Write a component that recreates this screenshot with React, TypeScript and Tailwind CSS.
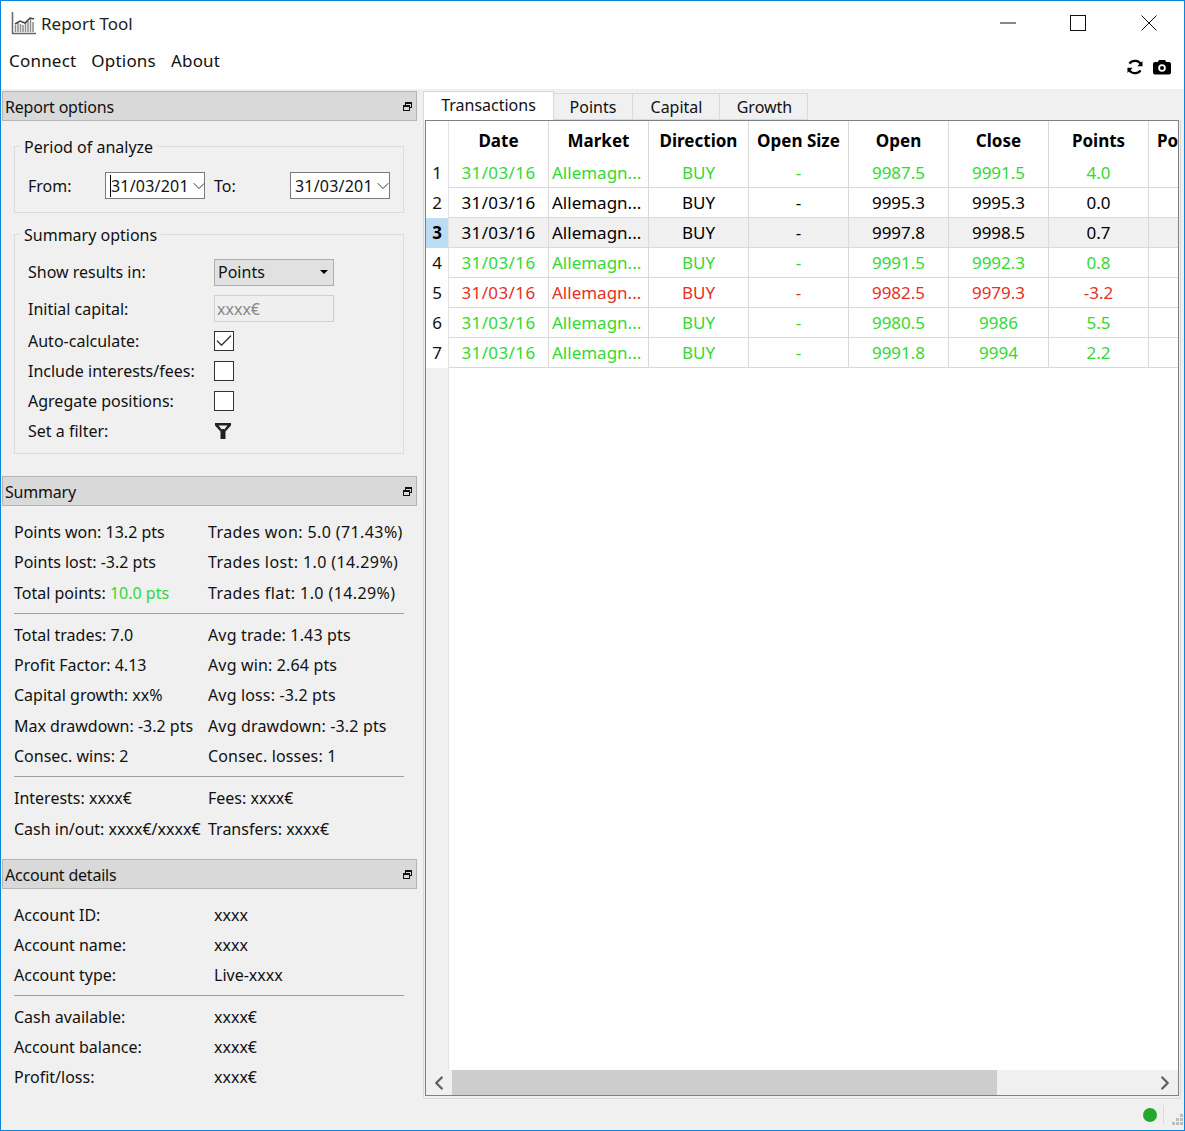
import { ChevronDown, ChevronLeft, ChevronRight, Check } from "lucide-react"

const green = "text-[#33d933]"
const red = "text-[#e6301f]"

const rows = [
  { open: "9987.5", close: "9991.5", points: "4.0", color: green },
  { open: "9995.3", close: "9995.3", points: "0.0", color: "text-black" },
  { open: "9997.8", close: "9998.5", points: "0.7", color: "text-black" },
  { open: "9991.5", close: "9992.3", points: "0.8", color: green },
  { open: "9982.5", close: "9979.3", points: "-3.2", color: red },
  { open: "9980.5", close: "9986", points: "5.5", color: green },
  { open: "9991.8", close: "9994", points: "2.2", color: green },
]

const headers = ["Date", "Market", "Direction", "Open Size", "Open", "Close", "Points"]

function DockHeader({ title }: { title: string }) {
  return (
    <div className="flex h-[30px] items-center justify-between border border-[#b4b4b4] bg-[#d9d9d9] pl-[2px] pr-[4px]">
      <span className="pt-[1px] tracking-[-0.2px]">{title}</span>
      <svg width="9" height="9" viewBox="0 0 9 9" fill="none" stroke="#111" strokeWidth="1">
        <rect x="2.5" y="0.5" width="6" height="5" />
        <rect x="0.5" y="3.5" width="6" height="5" fill="#d9d9d9" />
        <path d="M3 1.5h5M1 4.5h5" />
      </svg>
    </div>
  )
}

function StatRow({ left, right, accent, h = "h-[30px]", col = "w-[194px]", tr = "" }: { left: string; right: string; accent?: string; h?: string; col?: string; tr?: string }) {
  return (
    <div className={`flex ${h} items-center whitespace-nowrap`}>
      <div className={col}>
        {left}
        {accent && <span className={green}> {accent}</span>}
      </div>
      <div className={tr}>{right}</div>
    </div>
  )
}

function Rule() {
  return <div className="mb-[6px] mt-[5px] h-px bg-[#a0a0a0]" />
}

function DateField({ caret }: { caret?: boolean }) {
  return (
    <div className="flex h-[27px] w-[100px] items-center overflow-hidden border border-[#7a7a7a] bg-white pl-[4px]">
      <span className={`tracking-[0.2px] ${caret ? "border-l border-black" : ""}`}>31/03/201</span>
      <ChevronDown size={20} strokeWidth={1.2} className="ml-auto mr-[-1px] shrink-0 text-[#333]" />
    </div>
  )
}

function OptionRow({ label, children }: { label: string; children: React.ReactNode }) {
  return (
    <div className="flex h-[30px] items-center">
      <div className="w-[186px] shrink-0">{label}</div>
      {children}
    </div>
  )
}

function CheckBox({ checked }: { checked?: boolean }) {
  return (
    <div className="flex h-[20px] w-[20px] items-center justify-center border border-[#333] bg-white">
      {checked && <Check size={20} strokeWidth={1.6} className="shrink-0 text-[#333]" />}
    </div>
  )
}

export default function App() {
  return (
    <div className="flex h-[1131px] w-[1185px] flex-col overflow-hidden border border-[#0a84dc] bg-[#f0f0f0] font-['Noto_Sans','Open_Sans',sans-serif] text-[16px] leading-[22px] text-[#111]">
      {/* Title bar */}
      <div className="bg-white">
        <div className="flex h-[41px] items-center pl-[10px] pt-[2px]">
          <svg width="26" height="24" viewBox="0 0 26 24" className="shrink-0">
            <path d="M1.500 1v21.500H25" fill="none" stroke="#666" strokeWidth="1.500" />
            <path d="M4.500 21V14M7 21V12M9.500 21V13M12 21V14M14.500 21V11M17 21V10M19.500 21V8M22 21V11" stroke="#8c8c8c" strokeWidth="1.500" />
            <path d="M4 13l5-3 5 2 5-5 4 1" fill="none" stroke="#444" strokeWidth="1.500" />
          </svg>
          <span className="ml-[4px] pt-[2px] text-[17px] text-[#222]">Report Tool</span>
          <div className="ml-auto flex items-center">
            <svg width="16" height="2" className="mr-[54px]"><path d="M0 1h16" stroke="#111" /></svg>
            <svg width="16" height="16" className="mr-[55px]"><rect x="0.5" y="0.5" width="15" height="15" fill="none" stroke="#111" /></svg>
            <svg width="16" height="16" className="mr-[27px]"><path d="M0.5 0.5l15 15M15.5 0.5l-15 15" stroke="#111" /></svg>
          </div>
        </div>
        <div className="flex h-[47px] pl-[8px] pr-[13px]">
          <div className="flex gap-[15px] pt-[8px] text-[17px] tracking-[0.2px]">
            <span>Connect</span>
            <span>Options</span>
            <span>About</span>
          </div>
          <div className="ml-auto flex items-center gap-[9px] pt-[3px]">
            <svg width="18" height="18" viewBox="0 0 24 24" fill="none" stroke="#000" strokeWidth="3">
              <path d="M20.500 10A9 9 0 0 0 4.600 7.500M3.500 14a9 9 0 0 0 15.900 2.500" />
              <path d="M22 4v7h-7zM2 20v-7h7z" fill="#000" strokeWidth="0" />
            </svg>
            <svg width="18" height="16" viewBox="0 0 18 16">
              <path fillRule="evenodd" d="M6 1h6l1.200 2H16a2 2 0 0 1 2 2v8.500a2 2 0 0 1-2 2H2a2 2 0 0 1-2-2V5a2 2 0 0 1 2-2h2.800zM9 5.200a3.800 3.800 0 1 0 0 7.600 3.800 3.800 0 0 0 0-7.600zM9 7a2 2 0 1 1 0 4 2 2 0 0 1 0-4z" fill="#000" />
            </svg>
          </div>
        </div>
      </div>

      {/* Body */}
      <div className="flex min-h-0 flex-1 pl-[1px] pr-[4px] pt-[2px]">
        {/* Left column */}
        <div className="w-[415px] shrink-0">
          <DockHeader title="Report options" />

          <fieldset className="ml-[12px] mr-[13px] mt-[14px] h-[78px] border border-[#dcdcdc] pl-[13px]">
            <legend className="ml-[-8px] translate-y-px px-[4px] leading-[22px]">Period of analyze</legend>
            <div className="mt-[15px] flex items-center">
              <div className="w-[77px]">From:</div>
              <DateField caret />
              <div className="ml-[9px] w-[76px]">To:</div>
              <DateField />
            </div>
          </fieldset>

          <fieldset className="ml-[12px] mr-[13px] mt-[10px] h-[231px] border border-[#dcdcdc] pl-[13px]">
            <legend className="ml-[-8px] translate-y-px px-[4px] leading-[22px]">Summary options</legend>
            <div className="mt-[10px] flex h-[34px] items-center">
              <div className="w-[186px] shrink-0">Show results in:</div>
              <div className="flex h-[27px] w-[120px] items-center justify-between border border-[#adadad] bg-[#e1e1e1] pl-[3px] pr-[5px]">
                Points
                <span className="h-0 w-0 border-x-[4px] border-t-[4px] border-x-transparent border-t-black" />
              </div>
            </div>
            <div className="mb-[3px] mt-[5px] flex h-[29px] items-center">
              <div className="w-[186px] shrink-0">Initial capital:</div>
              <div className="flex h-[27px] w-[120px] items-center border border-[#d0d0d0] bg-[#efefef] pl-[2px] text-[#888]">xxxx€</div>
            </div>
            <OptionRow label="Auto-calculate:"><CheckBox checked /></OptionRow>
            <OptionRow label="Include interests/fees:"><CheckBox /></OptionRow>
            <OptionRow label="Agregate positions:"><CheckBox /></OptionRow>
            <OptionRow label="Set a filter:">
              <svg width="16" height="16" viewBox="0 0 16 16" className="ml-[1px]">
                <path fillRule="evenodd" d="M0 0h16v2.500L10.500 8.500V16h-5V8.500L0 2.500zM3.500 2.500L7 6.800v-.8h2v.8l3.500-4.300z" fill="#222" />
              </svg>
            </OptionRow>
          </fieldset>

          <div className="mt-[22px]">
            <DockHeader title="Summary" />
          </div>
          <div className="pl-[12px] pr-[13px] pt-[11px]">
            <StatRow left="Points won: 13.2 pts" right="Trades won: 5.0 (71.43%)" tr="tracking-[0.4px]" />
            <StatRow left="Points lost: -3.2 pts" right="Trades lost: 1.0 (14.29%)" tr="tracking-[0.4px]" />
            <StatRow left="Total points:" accent="10.0 pts" right="Trades flat: 1.0 (14.29%)" tr="tracking-[0.4px]" h="h-[31px]" />
            <Rule />
            <StatRow left="Total trades: 7.0" right="Avg trade: 1.43 pts" tr="tracking-[0.15px]" />
            <StatRow left="Profit Factor: 4.13" right="Avg win: 2.64 pts" tr="tracking-[0.15px]" />
            <StatRow left="Capital growth: xx%" right="Avg loss: -3.2 pts" tr="tracking-[0.15px]" />
            <StatRow left="Max drawdown: -3.2 pts" right="Avg drawdown: -3.2 pts" tr="tracking-[0.15px]" h="h-[31px]" />
            <StatRow left="Consec. wins: 2" right="Consec. losses: 1" tr="tracking-[0.15px]" />
            <Rule />
            <StatRow left="Interests: xxxx€" right="Fees: xxxx€" />
            <StatRow left="Cash in/out: xxxx€/xxxx€" right="Transfers: xxxx€" h="h-[31px]" />
          </div>

          <div className="mt-[15px]">
            <DockHeader title="Account details" />
          </div>
          <div className="pl-[12px] pr-[13px] pt-[11px]">
            <StatRow left="Account ID:" right="xxxx" col="w-[200px]" />
            <StatRow left="Account name:" right="xxxx" col="w-[200px]" />
            <StatRow left="Account type:" right="Live-xxxx" col="w-[200px]" />
            <Rule />
            <StatRow left="Cash available:" right="xxxx€" col="w-[200px]" />
            <StatRow left="Account balance:" right="xxxx€" col="w-[200px]" />
            <StatRow left="Profit/loss:" right="xxxx€" col="w-[200px]" />
          </div>
        </div>

        {/* Right column */}
        <div className="ml-[6px] w-[758px] shrink-0">
          <div className="relative z-10 flex h-[29px] items-end">
            <div className="flex h-[29px] w-[131px] items-center justify-center border border-b-0 border-[#d9d9d9] bg-white pb-[2px]">Transactions</div>
            <div className="flex h-[27px] w-[79px] items-center justify-center border border-l-0 border-[#d9d9d9] bg-[#f0f0f0]">Points</div>
            <div className="flex h-[27px] w-[87px] items-center justify-center border border-l-0 border-[#d9d9d9] bg-[#f0f0f0] pl-[1px]">Capital</div>
            <div className="flex h-[27px] w-[88px] items-center justify-center border border-l-0 border-[#d9d9d9] bg-[#f0f0f0] pl-[2px]">Growth</div>
          </div>

          <div className="h-[979px] border border-t-0 border-[#d9d9d9] pb-[2px] pl-[1px] pr-[1px]">
            <div className="flex h-full flex-col overflow-hidden border border-[#7f7f8a] bg-white">
              <div className="flex min-h-0 flex-1 text-[17px]">
                {/* Row header */}
                <div className="flex w-[23px] shrink-0 flex-col border-r border-[#e3e3e3]">
                  <div className="h-[37px] bg-white" />
                  {rows.map((row, i) => (
                    <div
                      key={i}
                      className={`flex h-[30px] items-center justify-center ${i === 2 ? "bg-[#bcdcf4] font-bold text-black" : "bg-white"}`}
                    >
                      {i + 1}
                    </div>
                  ))}
                  <div className="flex-1 bg-[#f0f0f0]" />
                </div>

                {/* Cells */}
                <div className="min-w-0 flex-1 overflow-hidden">
                  <div className="flex h-[37px] items-center font-bold text-black">
                    {headers.map((h) => (
                      <div key={h} className="flex h-full w-[100px] shrink-0 items-center justify-center border-r border-[#d9d9d9] pt-[3px] whitespace-nowrap">
                        {h}
                      </div>
                    ))}
                    <div className="flex h-full shrink-0 items-center pl-[8px] pt-[3px]">Po</div>
                  </div>
                  {rows.map((row, i) => (
                    <div key={i} className={`flex h-[30px] ${row.color} ${i === 2 ? "bg-[#f0f0f0]" : ""}`}>
                      <div className="flex w-[100px] shrink-0 items-center justify-center border-b border-r border-[#d9d9d9] tracking-[0.4px]">31/03/16</div>
                      <div className="flex w-[100px] shrink-0 items-center border-b border-r border-[#d9d9d9] pl-[3px]">Allemagn...</div>
                      <div className="flex w-[100px] shrink-0 items-center justify-center border-b border-r border-[#d9d9d9]">BUY</div>
                      <div className="flex w-[100px] shrink-0 items-center justify-center border-b border-r border-[#d9d9d9]">-</div>
                      <div className="flex w-[100px] shrink-0 items-center justify-center border-b border-r border-[#d9d9d9]">{row.open}</div>
                      <div className="flex w-[100px] shrink-0 items-center justify-center border-b border-r border-[#d9d9d9]">{row.close}</div>
                      <div className="flex w-[100px] shrink-0 items-center justify-center border-b border-r border-[#d9d9d9]">{row.points}</div>
                      <div className="w-[100px] shrink-0 border-b border-[#d9d9d9]" />
                    </div>
                  ))}
                </div>
              </div>

              {/* Horizontal scrollbar */}
              <div className="flex h-[25px] shrink-0 items-center bg-[#f0f0f0]">
                <div className="flex h-full w-[26px] shrink-0 items-center justify-center">
                  <ChevronLeft size={22} strokeWidth={2.6} className="shrink-0 text-[#606060]" />
                </div>
                <div className="h-full w-[545px] bg-[#cdcdcd]" />
                <div className="ml-auto flex h-full w-[26px] shrink-0 items-center justify-center">
                  <ChevronRight size={22} strokeWidth={2.6} className="shrink-0 text-[#606060]" />
                </div>
              </div>
            </div>
          </div>
        </div>
      </div>

      {/* Status bar */}
      <div className="flex h-[31px] shrink-0 items-center justify-end pr-[1px]">
        <span className="mr-[6px] h-[14px] w-[14px] rounded-full bg-[#22a82a]" />
        <span className="mr-[8px] h-[19px] w-px bg-[#dcdcdc]" />
        <svg width="11" height="11" className="mt-[10px] text-[#bdbdbd]" fill="currentColor">
          <rect x="8" y="0" width="3" height="3" />
          <rect x="4" y="4" width="3" height="3" />
          <rect x="8" y="4" width="3" height="3" />
          <rect x="0" y="8" width="3" height="3" />
          <rect x="4" y="8" width="3" height="3" />
          <rect x="8" y="8" width="3" height="3" />
        </svg>
      </div>
    </div>
  )
}
